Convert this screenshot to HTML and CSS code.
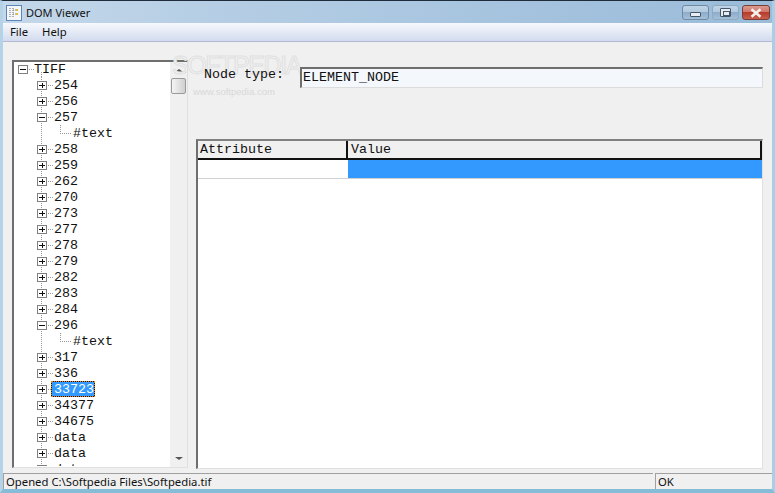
FILE: index.html
```html
<!DOCTYPE html>
<html lang="en">
<head>
<meta charset="utf-8">
<title>DOM Viewer</title>
<link rel="stylesheet" href="styles.css">
</head>
<body>
<div class="window">
  <header class="titlebar">
    <svg class="appicon" width="16" height="16" viewBox="0 0 16 16">
      <rect x="0.5" y="0.5" width="15" height="15" fill="#f4f6fa" stroke="#5c86b8"/>
      <path d="M4 3v10M7 3v10" stroke="#6a6a6a" fill="none" stroke-dasharray="1 1"/>
      <path d="M7 5h4M7 9h4" stroke="#8a8a6a" stroke-dasharray="1 1"/>
      <rect x="10" y="4" width="2" height="2" fill="#d8c040"/>
      <rect x="10" y="8" width="2" height="2" fill="#d8c040"/>
    </svg>
    <span class="title">DOM Viewer</span>
    <div class="controls">
      <div class="ctl ctl-min"><span class="glyph-min"></span></div>
      <div class="ctl ctl-max"><span class="glyph-max"></span></div>
      <div class="ctl ctl-close">
        <svg width="14" height="10" viewBox="0 0 14 10"><path d="M2.5 1.2 L11.5 8.8 M11.5 1.2 L2.5 8.8" stroke="#f4f0ec" stroke-width="2.6" fill="none"/></svg>
      </div>
    </div>
  </header>
  <nav class="menubar"><span class="menu">File</span><span class="menu">Help</span></nav>
  <main class="client">
    <section class="treebox">
      <div class="tree">
        <div class="row root"><span class="box minus"></span><span class="tick"></span><span class="label">TIFF</span></div>
        <div class="row lvl"><span class="box plus"></span><span class="tick"></span><span class="label">254</span></div>
        <div class="row lvl"><span class="box plus"></span><span class="tick"></span><span class="label">256</span></div>
        <div class="row lvl"><span class="box minus"></span><span class="tick"></span><span class="label">257</span></div>
        <div class="row leaf"><span class="elbow"></span><span class="label">#text</span></div>
        <div class="row lvl"><span class="box plus"></span><span class="tick"></span><span class="label">258</span></div>
        <div class="row lvl"><span class="box plus"></span><span class="tick"></span><span class="label">259</span></div>
        <div class="row lvl"><span class="box plus"></span><span class="tick"></span><span class="label">262</span></div>
        <div class="row lvl"><span class="box plus"></span><span class="tick"></span><span class="label">270</span></div>
        <div class="row lvl"><span class="box plus"></span><span class="tick"></span><span class="label">273</span></div>
        <div class="row lvl"><span class="box plus"></span><span class="tick"></span><span class="label">277</span></div>
        <div class="row lvl"><span class="box plus"></span><span class="tick"></span><span class="label">278</span></div>
        <div class="row lvl"><span class="box plus"></span><span class="tick"></span><span class="label">279</span></div>
        <div class="row lvl"><span class="box plus"></span><span class="tick"></span><span class="label">282</span></div>
        <div class="row lvl"><span class="box plus"></span><span class="tick"></span><span class="label">283</span></div>
        <div class="row lvl"><span class="box plus"></span><span class="tick"></span><span class="label">284</span></div>
        <div class="row lvl"><span class="box minus"></span><span class="tick"></span><span class="label">296</span></div>
        <div class="row leaf"><span class="elbow"></span><span class="label">#text</span></div>
        <div class="row lvl"><span class="box plus"></span><span class="tick"></span><span class="label">317</span></div>
        <div class="row lvl"><span class="box plus"></span><span class="tick"></span><span class="label">336</span></div>
        <div class="row lvl"><span class="box plus"></span><span class="tick"></span><span class="label selected">33723</span></div>
        <div class="row lvl"><span class="box plus"></span><span class="tick"></span><span class="label">34377</span></div>
        <div class="row lvl"><span class="box plus"></span><span class="tick"></span><span class="label">34675</span></div>
        <div class="row lvl"><span class="box plus"></span><span class="tick"></span><span class="label">data</span></div>
        <div class="row lvl"><span class="box plus"></span><span class="tick"></span><span class="label">data</span></div>
        <div class="row lvl"><span class="box plus"></span><span class="tick"></span><span class="label">data</span></div>
      </div>
      <div class="scrollbar">
        <span class="arrow up"></span>
        <span class="thumb"></span>
        <span class="track"></span>
        <span class="arrow down"></span>
      </div>
    </section>
    <section class="detail">
      <div class="nodetype">
        <span class="fieldlabel">Node type:</span>
        <div class="field">ELEMENT_NODE</div>
      </div>
      <div class="grid">
        <div class="gridhead">
          <div class="hcell hcell-a">Attribute</div>
          <div class="hcell hcell-b">Value</div>
        </div>
        <div class="gridrow">
          <div class="cell-a"></div>
          <div class="cell-b"></div>
        </div>
      </div>
    </section>
    <div class="watermark" aria-hidden="true">
      <div class="wm-big">SOFTPEDIA</div>
      <div class="wm-small">www.softpedia.com</div>
    </div>
  </main>
  <footer class="statusbar">
    <div class="pane pane-main">Opened C:\Softpedia Files\Softpedia.tif</div>
    <div class="pane pane-ok">OK</div>
  </footer>
</div>
</body>
</html>
```
FILE: styles.css
```css
* { box-sizing: border-box; }
html, body { margin: 0; padding: 0; }
body { width: 775px; height: 493px; overflow: hidden; background: #f0f0f0; }

.window {
  width: 775px;
  height: 493px;
  display: flex;
  flex-direction: column;
  position: relative;
  background: #f0f0f0;
  border-top: 1px solid #1e2c3c;
  border-left: 3px solid #b4d2e8;
  border-right: 3px solid #a6d0e8;
  border-bottom: 4px solid #86bcd8;
  font-family: "Liberation Sans", Arial, sans-serif;
  overflow: hidden;
}

.titlebar {
  height: 22px;
  flex: none;
  margin: 0 -3px;
  padding: 4px 5px 0 6px;
  display: flex;
  align-items: flex-start;
  background: linear-gradient(90deg, #c4d8ea 0, #b4cde4 30%, #a4c2de 70%, #9abcd9 100%);
  font-family: "Noto Sans", sans-serif;
}
.appicon { flex: none; }
.title { margin-left: 4px; font-size: 11px; line-height: 16px; color: #111; }
.controls { margin-left: auto; display: flex; gap: 3px; }
.ctl {
  height: 15px;
  border-radius: 3px;
  display: flex;
  align-items: center;
  justify-content: center;
}
.ctl-min, .ctl-max {
  width: 27px;
  border: 1px solid #6f8aa6;
  background: linear-gradient(#c0d4e6 0, #b2c9de 45%, #8eaccb 50%, #a4c0d8 100%);
}
.ctl-max { border-color: #8fa9c2; }
.ctl-close {
  width: 28px;
  border: 1px solid #7a3d38;
  background: linear-gradient(#dd9a8e 0, #d0776a 45%, #b73c2c 50%, #c8604e 100%);
}
.glyph-min { width: 11px; height: 5px; margin-top: 3px; background: #e8edf3; border: 1px solid #44566a; border-radius: 1px; }
.glyph-max { width: 11px; height: 9px; background: #e8edf3; border: 1px solid #44566a; border-radius: 1px; }
.glyph-max::after { content: ""; display: block; width: 5px; height: 3px; margin: 2px; border: 1px solid #44566a; }

.menubar {
  height: 19px;
  flex: none;
  padding-left: 7px;
  display: flex;
  gap: 14px;
  background: linear-gradient(#f6f8fc 0, #d2dbee 100%);
  border-bottom: 1px solid #b4b8d4;
  font-family: "Noto Sans", sans-serif;
  font-size: 11.3px;
  line-height: 17px;
  color: #111;
}

.client {
  flex: 1;
  min-height: 0;
  padding: 18px 0 0 9px;
  display: flex;
  position: relative;
  font-family: "Liberation Mono", "Courier New", monospace;
  font-size: 13.33px;
  color: #111;
}

.treebox {
  width: 176px;
  height: 408px;
  flex: none;
  display: flex;
  background: #fff;
  border-top: 2px solid #6e6e6e;
  border-left: 2px solid #6e6e6e;
  border-right: 1px solid #e0e0e0;
  border-bottom: 1px solid #e0e0e0;
  overflow: hidden;
}
.tree { width: 156px; flex: none; height: 405px; overflow: hidden; background: #fff; margin-top: -1px; }
.row { height: 16px; display: flex; align-items: center; white-space: nowrap; }
.root { padding-left: 4px; background: repeating-linear-gradient(#999 0 1px, transparent 1px 2px) 27px 11px / 1px 5px no-repeat; }
.lvl {
  padding-left: 23px;
  background: repeating-linear-gradient(#999 0 1px, transparent 1px 2px) 27px 0 / 1px 100% no-repeat;
}
.leaf {
  padding-left: 46px;
  background: repeating-linear-gradient(#999 0 1px, transparent 1px 2px) 27px 0 / 1px 100% no-repeat;
}
.box {
  width: 10px;
  height: 9px;
  flex: none;
  border: 1px solid #808080;
  background-color: #fff;
  background-repeat: no-repeat;
}
.minus { background-image: linear-gradient(#111, #111); background-size: 6px 1px; background-position: center; }
.plus {
  background-image: linear-gradient(#111, #111), linear-gradient(#111, #111);
  background-size: 6px 1px, 1px 5px;
  background-position: center, center;
}
.tick {
  width: 5px;
  height: 1px;
  flex: none;
  margin-left: 1px;
  background: repeating-linear-gradient(90deg, #999 0 1px, transparent 1px 2px);
}
.elbow {
  width: 11px;
  height: 9px;
  flex: none;
  margin-top: -8px;
  border-left: 1px dotted #999;
  border-bottom: 1px dotted #999;
}
.label { padding-left: 1px; line-height: 15px; }
.root .label { padding-left: 0; }
.leaf .label { margin-left: 1px; padding-left: 1px; }
.selected {
  background: #3399ff;
  color: #fff;
  border: 1px solid #111;
  outline: 1px dotted #e08a20;
  outline-offset: -1px;
  height: 16px;
  margin-left: -2px;
  padding: 0 0 0 2px;
  line-height: 15px;
}

.scrollbar {
  width: 17px;
  flex: none;
  height: 405px;
  display: flex;
  flex-direction: column;
  background: #f0f0f0;
}
.arrow { flex: none; display: flex; align-items: center; justify-content: center; }
.up { height: 16px; }
.down { height: 17px; }
.arrow::before { content: ""; width: 0; height: 0; border-left: 4px solid transparent; border-right: 4px solid transparent; }
.up::before { border-bottom: 3px solid #555; }
.down::before { border-top: 3px solid #555; }
.thumb {
  height: 16px;
  flex: none;
  margin-left: 1px;
  width: 15px;
  border: 1px solid #9a9a9a;
  border-radius: 2px;
  background: linear-gradient(90deg, #f4f4f4, #e2e2e2 50%, #cfcfcf);
}
.track { flex: 1; }

.detail {
  flex: 1;
  min-width: 0;
  padding-left: 8px;
  display: flex;
  flex-direction: column;
  position: relative;
  z-index: 1;
}
.nodetype { height: 79px; flex: none; padding: 7px 0 0 8px; display: flex; align-items: flex-start; }
.fieldlabel { width: 96px; flex: none; line-height: 15px; }
.field {
  width: 463px;
  height: 21px;
  padding: 1px 0 0 1px;
  line-height: 15px;
  background: #f4f7fc;
  border-top: 2px solid #6e6e6e;
  border-left: 2px solid #6e6e6e;
  border-right: 1px solid #dcdcdc;
  border-bottom: 1px solid #dcdcdc;
}

.grid {
  width: 567px;
  flex: 1;
  background: #fff;
  border-top: 2px solid #808080;
  border-left: 2px solid #6e6e6e;
  border-right: 1px solid #e0e0e0;
  border-bottom: 1px solid #e0e0e0;
}
.gridhead { height: 19px; display: flex; background: #f0f0f0; border-bottom: 2px solid #111; }
.hcell { padding-left: 2px; line-height: 18px; }
.hcell-a { width: 150px; border-right: 2px solid #111; }
.hcell-b { flex: 1; padding-left: 3px; border-right: 2px solid #111; }
.gridrow { height: 19px; display: flex; border-bottom: 1px solid #d0d0d0; }
.cell-a { width: 150px; background: #fff; }
.cell-b { flex: 1; background: #3399ff; }

.watermark { position: absolute; left: 169px; top: 10px; pointer-events: none; }
.wm-big {
  font-family: "Liberation Sans", sans-serif;
  font-size: 25px;
  line-height: 26px;
  letter-spacing: -1.4px;
  color: #f2f2f2;
  -webkit-text-stroke: 1px #e0e0e0;
}
.wm-small {
  margin: 7px 0 0 21px;
  font-family: "Liberation Sans", sans-serif;
  font-size: 9.5px;
  line-height: 13px;
  color: #d8d8d8;
}

.statusbar { height: 16px; flex: none; display: flex; margin-top: 4px; font-family: "Noto Sans", sans-serif; font-size: 11.3px; color: #111; }
.pane { height: 16px; padding-left: 2px; line-height: 15px; border-top: 1px solid #a0a0a0; border-left: 1px solid #a0a0a0; }
.pane-main { width: 650px; }
.pane-ok { flex: 1; margin-left: 2px; }
```
